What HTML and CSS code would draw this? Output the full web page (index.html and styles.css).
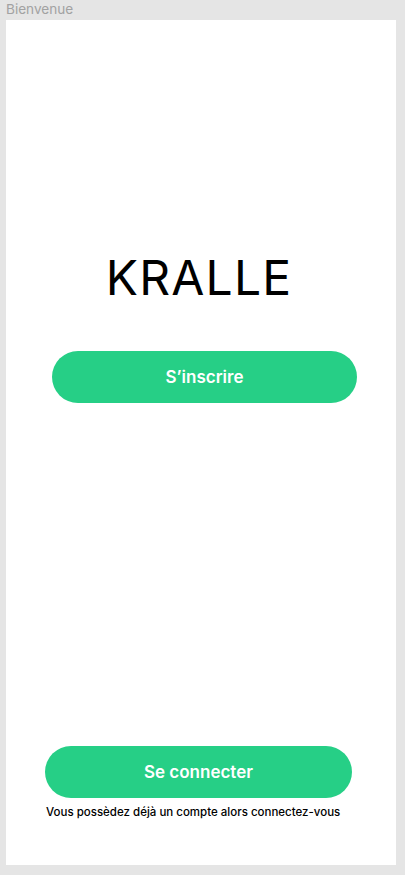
FILE: index.html
```html
<!DOCTYPE html>
<html lang="fr">
<head>
<meta charset="utf-8">
<title>Bienvenue</title>
<link rel="stylesheet" href="styles.css">
</head>
<body>
  <div class="label">Bienvenue</div>
  <main class="frame">
    <h1 class="brand">KRALLE</h1>
    <button class="btn btn-signup">S’inscrire</button>
    <div class="bottom">
      <button class="btn btn-login">Se connecter</button>
      <p class="hint">Vous possèdez déjà un compte alors connectez-vous</p>
    </div>
  </main>
</body>
</html>
```

FILE: styles.css
```css
* { box-sizing: border-box; }
html, body {
  margin: 0;
  padding: 0;
  background: #e5e5e5;
  font-family: Inter, "Noto Sans", sans-serif;
}
body {
  width: 405px;
  height: 875px;
  overflow: hidden;
}
.label {
  height: 20px;
  padding-left: 6px;
  font-size: 13.6px;
  line-height: 20px;
  color: #a2a2a2;
  transform: translateY(-1px);
}
.frame {
  margin-left: 6px;
  width: 390px;
  height: 845px;
  background: #ffffff;
  display: flex;
  flex-direction: column;
  padding-top: 233.5px;
  padding-bottom: 45px;
}
.brand {
  margin: 0;
  font-size: 48px;
  line-height: 48px;
  font-weight: 400;
  letter-spacing: 1.2px;
  text-align: center;
  color: #000;
  padding-right: 4px;
}
.btn {
  border: none;
  border-radius: 26px;
  height: 52px;
  width: 305px;
  background: #26cf86;
  color: #fff;
  font-family: Inter, "Noto Sans", sans-serif;
  font-size: 17px;
  font-weight: 600;
  padding: 0;
  display: flex;
  align-items: center;
  justify-content: center;
}
.btn-signup {
  margin-top: 49.5px;
  margin-left: 46px;
}
.bottom {
  margin-top: auto;
  padding-left: 39px;
  display: flex;
  flex-direction: column;
  gap: 7px;
}
.btn-login {
  width: 307px;
}
.hint {
  margin: 0;
  padding-left: 1px;
  font-size: 11.5px;
  line-height: 15px;
  font-weight: 500;
  color: #000;
}
```
